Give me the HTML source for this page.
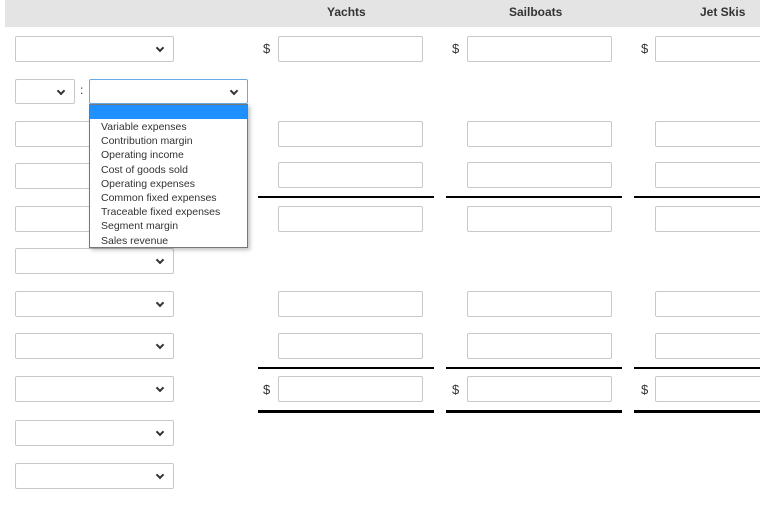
<!DOCTYPE html>
<html><head><style>
body{margin:0;width:760px;height:509px;background:#fff;position:relative;overflow:hidden;font-family:"Liberation Sans",sans-serif;}
.a{position:absolute;box-sizing:border-box}
.hd{left:5px;top:0;width:755px;height:27px;background:#e4e4e4}
.h{font-weight:bold;font-size:12px;color:#333;top:5px}
.sel{border:1px solid #c8c8c8;border-radius:2px;background:#fff;height:26px}
.sel:after{content:"";position:absolute;right:10px;top:8px;width:4px;height:4px;border-right:2px solid #333;border-bottom:2px solid #333;transform:rotate(45deg)}
.in{border:1px solid #c8c8c8;border-radius:2px;background:#fff;height:26px}
.d{font-size:13px;color:#333}
.ln{height:1.5px;background:#000}
.tk{height:3px;background:#000}
.dd{left:89px;top:104px;width:159px;height:144px;border:1px solid #777;background:#fff;box-shadow:2px 2px 4px rgba(0,0,0,.25);font-size:10.5px;color:#333;line-height:14.2px}
.dd div{padding-left:11px}
</style></head><body>
<div class="a hd"></div>
<div class="a h" style="left:327px">Yachts</div>
<div class="a h" style="left:509px">Sailboats</div>
<div class="a h" style="left:700px">Jet Skis</div>

<div class="a sel" style="left:15px;top:36px;width:159px"></div>
<div class="a sel" style="left:15px;top:79px;width:60px;height:25px"></div>
<div class="a" style="left:80px;top:83px;font-size:12px;color:#333">:</div>
<div class="a sel" style="left:89px;top:79px;width:159px;height:25px;border-color:#6aa9e9"></div>
<div class="a sel" style="left:15px;top:121px;width:159px"></div>
<div class="a sel" style="left:15px;top:163px;width:159px"></div>
<div class="a sel" style="left:15px;top:206px;width:159px"></div>
<div class="a sel" style="left:15px;top:248px;width:159px"></div>
<div class="a sel" style="left:15px;top:291px;width:159px"></div>
<div class="a sel" style="left:15px;top:333px;width:159px"></div>
<div class="a sel" style="left:15px;top:376px;width:159px"></div>
<div class="a sel" style="left:15px;top:420px;width:159px"></div>
<div class="a sel" style="left:15px;top:463px;width:159px"></div>

<div class="a d" style="left:263px;top:41px">$</div>
<div class="a d" style="left:452px;top:41px">$</div>
<div class="a d" style="left:641px;top:41px">$</div>
<div class="a d" style="left:263px;top:382px">$</div>
<div class="a d" style="left:452px;top:382px">$</div>
<div class="a d" style="left:641px;top:382px">$</div>

<div class="a in" style="left:278px;top:36px;width:145px"></div>
<div class="a in" style="left:467px;top:36px;width:145px"></div>
<div class="a in" style="left:655px;top:36px;width:110px"></div>

<div class="a in" style="left:278px;top:121px;width:145px"></div>
<div class="a in" style="left:467px;top:121px;width:145px"></div>
<div class="a in" style="left:655px;top:121px;width:110px"></div>
<div class="a in" style="left:278px;top:162px;width:145px"></div>
<div class="a in" style="left:467px;top:162px;width:145px"></div>
<div class="a in" style="left:655px;top:162px;width:110px"></div>
<div class="a ln" style="left:258px;top:196px;width:176px"></div>
<div class="a ln" style="left:446px;top:196px;width:176px"></div>
<div class="a ln" style="left:634px;top:196px;width:126px"></div>
<div class="a in" style="left:278px;top:206px;width:145px"></div>
<div class="a in" style="left:467px;top:206px;width:145px"></div>
<div class="a in" style="left:655px;top:206px;width:110px"></div>

<div class="a in" style="left:278px;top:291px;width:145px"></div>
<div class="a in" style="left:467px;top:291px;width:145px"></div>
<div class="a in" style="left:655px;top:291px;width:110px"></div>
<div class="a in" style="left:278px;top:333px;width:145px"></div>
<div class="a in" style="left:467px;top:333px;width:145px"></div>
<div class="a in" style="left:655px;top:333px;width:110px"></div>
<div class="a ln" style="left:258px;top:367px;width:176px"></div>
<div class="a ln" style="left:446px;top:367px;width:176px"></div>
<div class="a ln" style="left:634px;top:367px;width:126px"></div>
<div class="a in" style="left:278px;top:376px;width:145px"></div>
<div class="a in" style="left:467px;top:376px;width:145px"></div>
<div class="a in" style="left:655px;top:376px;width:110px"></div>
<div class="a tk" style="left:258px;top:410px;width:176px"></div>
<div class="a tk" style="left:446px;top:410px;width:176px"></div>
<div class="a tk" style="left:634px;top:410px;width:126px"></div>

<div class="a dd">
<div style="background:#1e90ff;height:14px;padding:0"></div>
<div style="margin-top:1px">Variable expenses</div>
<div>Contribution margin</div>
<div>Operating income</div>
<div>Cost of goods sold</div>
<div>Operating expenses</div>
<div>Common fixed expenses</div>
<div>Traceable fixed expenses</div>
<div>Segment margin</div>
<div>Sales revenue</div>
</div>
</body></html>
